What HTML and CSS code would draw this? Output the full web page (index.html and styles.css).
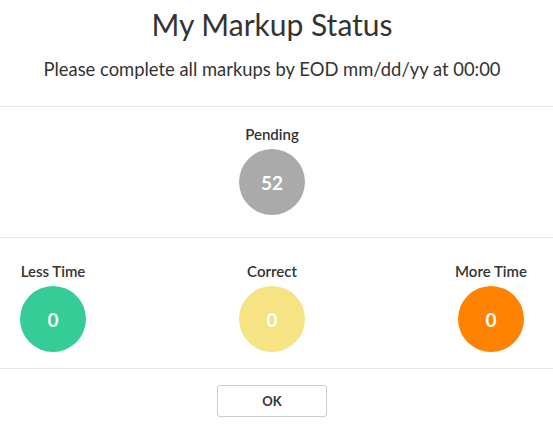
FILE: index.html
```html
<!DOCTYPE html>
<html>
<head>
<meta charset="utf-8">
<link rel="stylesheet" href="styles.css">
</head>
<body>
<div class="modal">
  <header class="header">
    <h1 class="title">My Markup Status</h1>
    <p class="subtitle">Please complete all markups by EOD mm/dd/yy at 00:00</p>
  </header>
  <section class="section pending">
    <div class="stat">
      <div class="label">Pending</div>
      <div class="circle grey">52</div>
    </div>
  </section>
  <section class="section row">
    <div class="stat">
      <div class="label">Less Time</div>
      <div class="circle green">0</div>
    </div>
    <div class="stat">
      <div class="label">Correct</div>
      <div class="circle yellow">0</div>
    </div>
    <div class="stat">
      <div class="label">More Time</div>
      <div class="circle orange">0</div>
    </div>
  </section>
  <footer class="footer">
    <button class="ok">OK</button>
  </footer>
</div>
</body>
</html>
```

FILE: styles.css
```css
html, body {
  margin: 0;
  padding: 0;
  background: #ffffff;
}
body {
  font-family: Lato, "Open Sans", sans-serif;
  color: #333333;
  width: 553px;
}
.modal {
  width: 553px;
}
.header {
  width: 544px;
  padding: 4px 0 25px;
  text-align: center;
  border-bottom: 1px solid #e5e5e5;
  box-sizing: content-box;
}
.header, .section, .footer {
  padding-right: 9px;
}
.title {
  margin: 0;
  font-size: 30px;
  line-height: 40px;
  font-weight: 400;
}
.subtitle {
  margin: 13px 0 0;
  font-size: 18.4px;
  line-height: 24px;
}
.section {
  width: 544px;
  border-bottom: 1px solid #e5e5e5;
  display: flex;
}
.pending {
  justify-content: center;
  padding-top: 17px;
  padding-bottom: 22px;
}
.row {
  justify-content: space-between;
  padding: 23px 0 16px;
  padding-right: 9px;
  box-sizing: content-box;
}
.row .stat {
  width: 66px;
}
.row .stat:first-child {
  margin-left: 20px;
}
.row .stat:last-child {
  margin-right: 20px;
}
.stat {
  display: flex;
  flex-direction: column;
  align-items: center;
}
.label {
  font-size: 15px;
  line-height: 20px;
  font-weight: 600;
  white-space: nowrap;
}
.circle {
  margin-top: 5px;
  width: 66px;
  height: 66px;
  border-radius: 50%;
  display: flex;
  align-items: center;
  justify-content: center;
  color: #ffffff;
  font-size: 19px;
  font-weight: 700;
}
.grey { background: #aaaaaa; }
.green { background: #35cc98; }
.yellow { background: #f5e384; }
.orange { background: #ff8200; }
.footer {
  width: 544px;
  display: flex;
  justify-content: center;
  padding-top: 16px;
}
.ok {
  width: 110px;
  height: 32px;
  background: #ffffff;
  border: 1px solid #cccccc;
  border-radius: 3px;
  font-family: inherit;
  font-size: 13px;
  font-weight: 700;
  color: #333333;
  padding: 0;
}
```
